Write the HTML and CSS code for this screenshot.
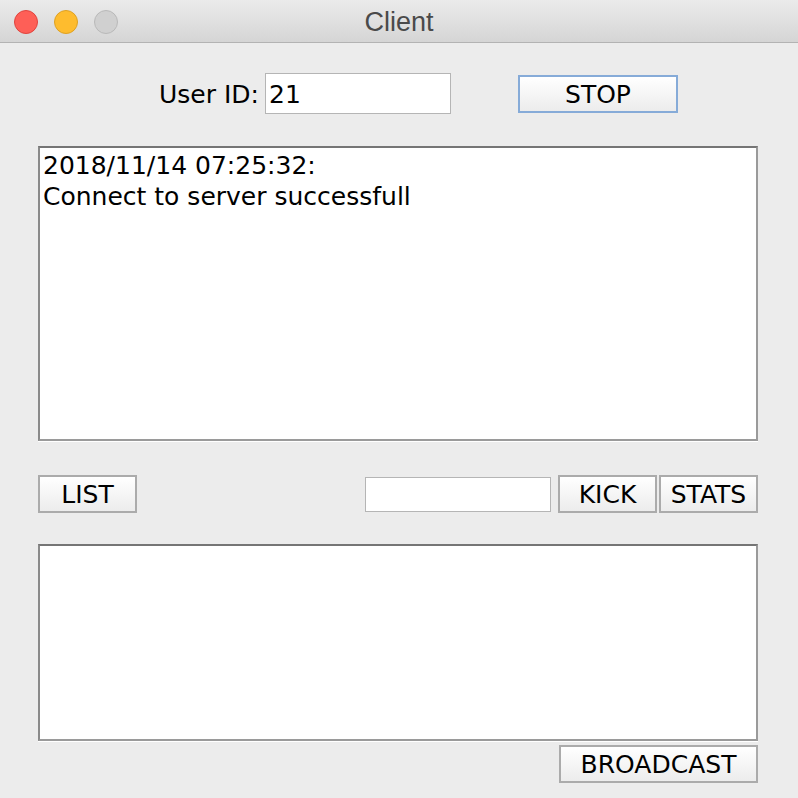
FILE: index.html
```html
<!DOCTYPE html>
<html>
<head>
<meta charset="utf-8">
<link rel="stylesheet" href="styles.css">
</head>
<body>
<div class="window">
  <div class="titlebar">
    <div class="lights">
      <span class="light red"></span>
      <span class="light yellow"></span>
      <span class="light gray"></span>
    </div>
    <div class="title">Client</div>
  </div>
  <div class="content">
    <div class="row-top">
      <span class="label">User ID:</span>
      <div class="field field-id">21</div>
      <button class="btn btn-stop">STOP</button>
    </div>
    <div class="area area-log">
      <div>2018/11/14 07:25:32:</div>
      <div>Connect to server successfull</div>
    </div>
    <div class="row-mid">
      <button class="btn btn-list">LIST</button>
      <div class="spacer"></div>
      <div class="field field-kick"></div>
      <button class="btn btn-kick">KICK</button>
      <button class="btn btn-stats">STATS</button>
    </div>
    <div class="area area-msg"></div>
    <div class="row-bottom">
      <button class="btn btn-broadcast">BROADCAST</button>
    </div>
  </div>
</div>
</body>
</html>
```
FILE: styles.css
```css
html, body {
  margin: 0;
  padding: 0;
  background: #ececec;
}
.window {
  width: 798px;
  height: 798px;
  background: #ececec;
  font-family: "DejaVu Sans", "Liberation Sans", sans-serif;
  color: #000;
  overflow: hidden;
}
.titlebar {
  position: relative;
  height: 42px;
  background: linear-gradient(#ebebeb, #d5d5d5);
  border-bottom: 1px solid #b3b3b3;
  display: flex;
  align-items: center;
  justify-content: center;
}
.lights {
  position: absolute;
  left: 14px;
  top: 10px;
  display: flex;
  gap: 16px;
}
.light {
  width: 24px;
  height: 24px;
  border-radius: 50%;
  box-sizing: border-box;
}
.light.red { background: #fe5f57; border: 1px solid #e0443e; }
.light.yellow { background: #febc2e; border: 1px solid #dea123; }
.light.gray { background: #d0d0d0; border: 1px solid #b9b9b9; }
.title {
  font-family: "Liberation Sans", Arial, sans-serif;
  font-size: 27px;
  color: #4a4a4a;
  margin-top: 2px;
}
.content {
  display: flex;
  flex-direction: column;
  padding: 0 40px 0 38px;
}
.row-top {
  display: flex;
  align-items: center;
  margin-top: 30px;
  height: 41px;
  padding-left: 121px;
}
.label {
  font-size: 25px;
  margin-right: 6px;
  padding-top: 2px;
}
.field {
  box-sizing: border-box;
  background: #fff;
  border: 1px solid #b5b5b5;
  font-size: 25px;
  line-height: 41px;
  padding-left: 3px;
}
.field-id {
  width: 186px;
  height: 41px;
}
.btn {
  box-sizing: border-box;
  height: 38px;
  background: linear-gradient(#ffffff, #ececec);
  border: 2px solid #ababab;
  font-family: "DejaVu Sans", "Liberation Sans", sans-serif;
  font-size: 25px;
  color: #000;
  padding: 2px 0 0 0;
  line-height: 32px;
}
.btn-stop {
  width: 160px;
  margin-left: 67px;
  border-color: #86abd8;
}
.area {
  box-sizing: border-box;
  background: #fff;
  border: 2px solid #9a9a9a;
  border-top-color: #757575;
  border-left-color: #8a8a8a;
  box-shadow: 0 1px 0 #ffffff;
}
.area-log {
  margin-top: 32px;
  height: 295px;
  padding: 2px 3px;
  font-size: 25px;
  line-height: 31px;
}
.row-mid {
  display: flex;
  align-items: center;
  margin-top: 34px;
  height: 38px;
}
.btn-list { width: 99px; }
.spacer { flex: 1; }
.field-kick {
  width: 186px;
  height: 35px;
  margin-right: 7px;
}
.btn-kick { width: 99px; }
.btn-stats { width: 99px; margin-left: 2px; }
.area-msg {
  margin-top: 31px;
  height: 197px;
}
.row-bottom {
  display: flex;
  justify-content: flex-end;
  margin-top: 4px;
}
.btn-broadcast { width: 199px; }
```
